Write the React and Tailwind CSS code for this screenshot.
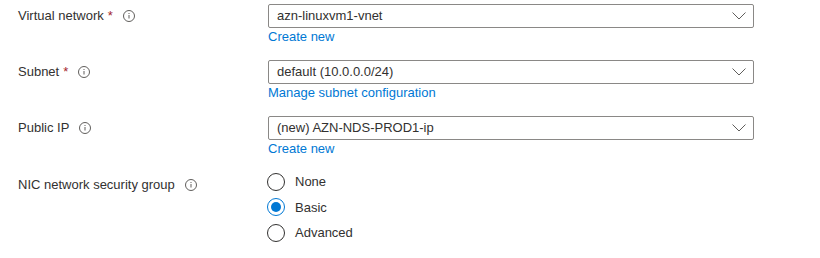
import { useState } from "react";

const Info = () => (
  <svg width="12" height="12" viewBox="0 0 12 12" className="text-[#605e5c]">
    <circle cx="6" cy="6" r="5.5" fill="none" stroke="currentColor" strokeWidth="1" />
    <rect x="5.5" y="5" width="1" height="3.5" fill="currentColor" />
    <rect x="5.5" y="3" width="1" height="1" fill="currentColor" />
  </svg>
);

const Chevron = () => (
  <svg width="14" height="8" viewBox="0 0 14 8" className="text-[#605e5c]">
    <path d="M0.5 0.5 L7 7 L13.5 0.5" fill="none" stroke="currentColor" strokeWidth="1" />
  </svg>
);

const Label = ({ text, required }) => (
  <div className="flex items-center h-6 text-[13px] text-[#323130]">
    <span>{text}</span>
    {required && <span className="text-[#a4262c] ml-1">*</span>}
    <span className="ml-[10px] flex items-center">
      <Info />
    </span>
  </div>
);

const Select = ({ value, link }) => (
  <div>
    <div className="h-6 border border-[#8a8886] rounded-[2px] flex items-center justify-between pl-2 pr-[7px] text-[13px] text-[#323130]">
      <span>{value}</span>
      <Chevron />
    </div>
    <a className="block text-[13px] text-[#0078d4] leading-[18px]">{link}</a>
  </div>
);

const Radio = ({ label, checked, onClick }) => (
  <div className="flex items-center h-[25.5px] cursor-pointer" onClick={onClick}>
    <span
      className={`w-[18px] h-[18px] rounded-full border flex items-center justify-center ${
        checked ? "border-[#0078d4]" : "border-[#323130]"
      }`}
    >
      {checked && <span className="w-[10px] h-[10px] rounded-full bg-[#0078d4]" />}
    </span>
    <span className="ml-[10px] text-[13px] text-[#323130]">{label}</span>
  </div>
);

const App = () => {
  const [nsg, setNsg] = useState("Basic");

  return (
    <div
      className="w-[820px] h-[258px] bg-white pl-[18px] pt-1"
      style={{ fontFamily: "'Liberation Sans', Arial, sans-serif" }}
    >
      <div className="grid grid-cols-[250px_486px] gap-y-[14px]">
        <Label text="Virtual network" required />
        <Select value="azn-linuxvm1-vnet" link="Create new" />

        <Label text="Subnet" required />
        <Select value="default (10.0.0.0/24)" link="Manage subnet configuration" />

        <Label text="Public IP" />
        <Select value="(new) AZN-NDS-PROD1-ip" link="Create new" />

        <div className="pt-[1px]">
          <Label text="NIC network security group" />
        </div>
        <div className="-ml-[1px] -mt-[3px]">
          {["None", "Basic", "Advanced"].map((o) => (
            <Radio key={o} label={o} checked={nsg === o} onClick={() => setNsg(o)} />
          ))}
        </div>
      </div>
    </div>
  );
};

export default App;
